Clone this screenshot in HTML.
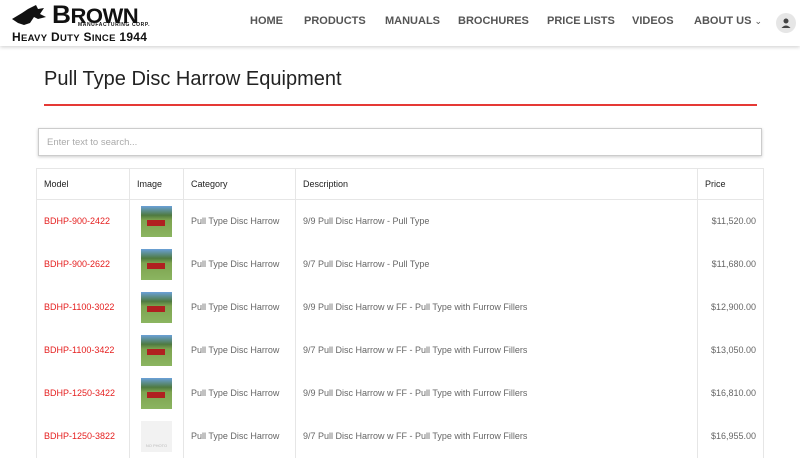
<!DOCTYPE html>
<html><head><meta charset="utf-8"><style>
*{margin:0;padding:0;box-sizing:border-box}
body{width:800px;height:450px;overflow:hidden;background:#fff;font-family:"Liberation Sans",sans-serif;position:relative}
.hdr{position:absolute;left:0;top:0;width:800px;height:46px;background:#fff;box-shadow:0 1px 4px rgba(0,0,0,.2)}
.nav{position:absolute;top:15px;font-size:11px;font-weight:bold;color:#555;letter-spacing:0}
h1{position:absolute;left:44px;top:68px;font-size:20px;font-weight:normal;color:#222}
.rule{position:absolute;left:44px;top:104px;width:713px;height:2px;background:#e53935}
.search{position:absolute;left:38px;top:128px;width:724px;height:28px;border:1px solid #ccc;box-shadow:0 1px 3px rgba(0,0,0,.2);font-size:9.5px;color:#aaa;padding:8px 8px}
table{position:absolute;left:36px;top:168px;width:728px;border-collapse:collapse;font-size:9px}
td,th{border-left:1px solid #e6e6e6;border-right:1px solid #e6e6e6;padding:0 7px;text-align:left;color:#666;font-weight:normal;height:43px}
th{height:31px;color:#222;border-top:1px solid #e6e6e6;border-bottom:1px solid #e6e6e6}
td.m{color:#e52020}
td.p{text-align:right}
.img{width:31px;height:31px;margin-left:4px;background:linear-gradient(#6aa0d8 0,#4f7a40 30%,#7da350 45%,#8bb560 100%);position:relative}
.img:after{content:"";position:absolute;left:6px;top:14px;width:18px;height:6px;background:#b02020}
.np{background:#f2f2f2;font-size:4px;color:#bbb;text-align:center;padding-top:22px}
.np:after{display:none}
</style></head><body>
<div class="hdr">
<svg style="position:absolute;left:10px;top:5px" width="40" height="22" viewBox="0 0 40 22"><path d="M2 14 L12 8 L18 4 L22 2 L26 0 L28 4 L34 3 L30 9 L36 12 L28 14 L24 12 L20 18 L14 20 L8 18 Z" fill="#111"/></svg>
<div style="position:absolute;left:52px;top:4px;font-family:'Liberation Sans',sans-serif;font-weight:bold;font-size:25px;color:#111;line-height:22px;letter-spacing:-.5px;transform:scaleX(1.05);transform-origin:left">B<span style="font-size:21px">ROWN</span></div>
<div style="position:absolute;left:78px;top:22px;font-size:5px;font-weight:bold;color:#111;letter-spacing:.6px">MANUFACTURING CORP.</div>
<div style="position:absolute;left:12px;top:30px;font-size:12px;font-weight:bold;color:#111;letter-spacing:.3px">H<span style="font-size:9.5px">EAVY</span> D<span style="font-size:9.5px">UTY</span> S<span style="font-size:9.5px">INCE</span> 1944</div>
<span class="nav" style="left:250px">HOME</span>
<span class="nav" style="left:304px">PRODUCTS</span>
<span class="nav" style="left:385px">MANUALS</span>
<span class="nav" style="left:458px">BROCHURES</span>
<span class="nav" style="left:547px">PRICE LISTS</span>
<span class="nav" style="left:632px">VIDEOS</span>
<span class="nav" style="left:694px">ABOUT US <span style="font-weight:normal;font-size:9px">&#8964;</span></span>
<div style="position:absolute;left:776px;top:13px;width:20px;height:20px;border-radius:50%;background:#e6e6e6"><svg width="20" height="20" viewBox="0 0 20 20"><circle cx="10" cy="8" r="2.5" fill="#444"/><path d="M5.5 15 Q10 10 14.5 15 Z" fill="#444"/></svg></div>
</div>
<h1>Pull Type Disc Harrow Equipment</h1>
<div class="rule"></div>
<div class="search">Enter text to search...</div>
<table>
<tr><th style="width:93px">Model</th><th style="width:54px">Image</th><th style="width:112px">Category</th><th>Description</th><th style="width:66px">Price</th></tr>
<tr><td class="m">BDHP-900-2422</td><td><div class="img"></div></td><td>Pull Type Disc Harrow</td><td>9/9 Pull Disc Harrow - Pull Type</td><td class="p">$11,520.00</td></tr>
<tr><td class="m">BDHP-900-2622</td><td><div class="img"></div></td><td>Pull Type Disc Harrow</td><td>9/7 Pull Disc Harrow - Pull Type</td><td class="p">$11,680.00</td></tr>
<tr><td class="m">BDHP-1100-3022</td><td><div class="img"></div></td><td>Pull Type Disc Harrow</td><td>9/9 Pull Disc Harrow w FF - Pull Type with Furrow Fillers</td><td class="p">$12,900.00</td></tr>
<tr><td class="m">BDHP-1100-3422</td><td><div class="img"></div></td><td>Pull Type Disc Harrow</td><td>9/7 Pull Disc Harrow w FF - Pull Type with Furrow Fillers</td><td class="p">$13,050.00</td></tr>
<tr><td class="m">BDHP-1250-3422</td><td><div class="img"></div></td><td>Pull Type Disc Harrow</td><td>9/9 Pull Disc Harrow w FF - Pull Type with Furrow Fillers</td><td class="p">$16,810.00</td></tr>
<tr><td class="m">BDHP-1250-3822</td><td><div class="img np">NO PHOTO</div></td><td>Pull Type Disc Harrow</td><td>9/7 Pull Disc Harrow w FF - Pull Type with Furrow Fillers</td><td class="p">$16,955.00</td></tr>
</table>
</body></html>
